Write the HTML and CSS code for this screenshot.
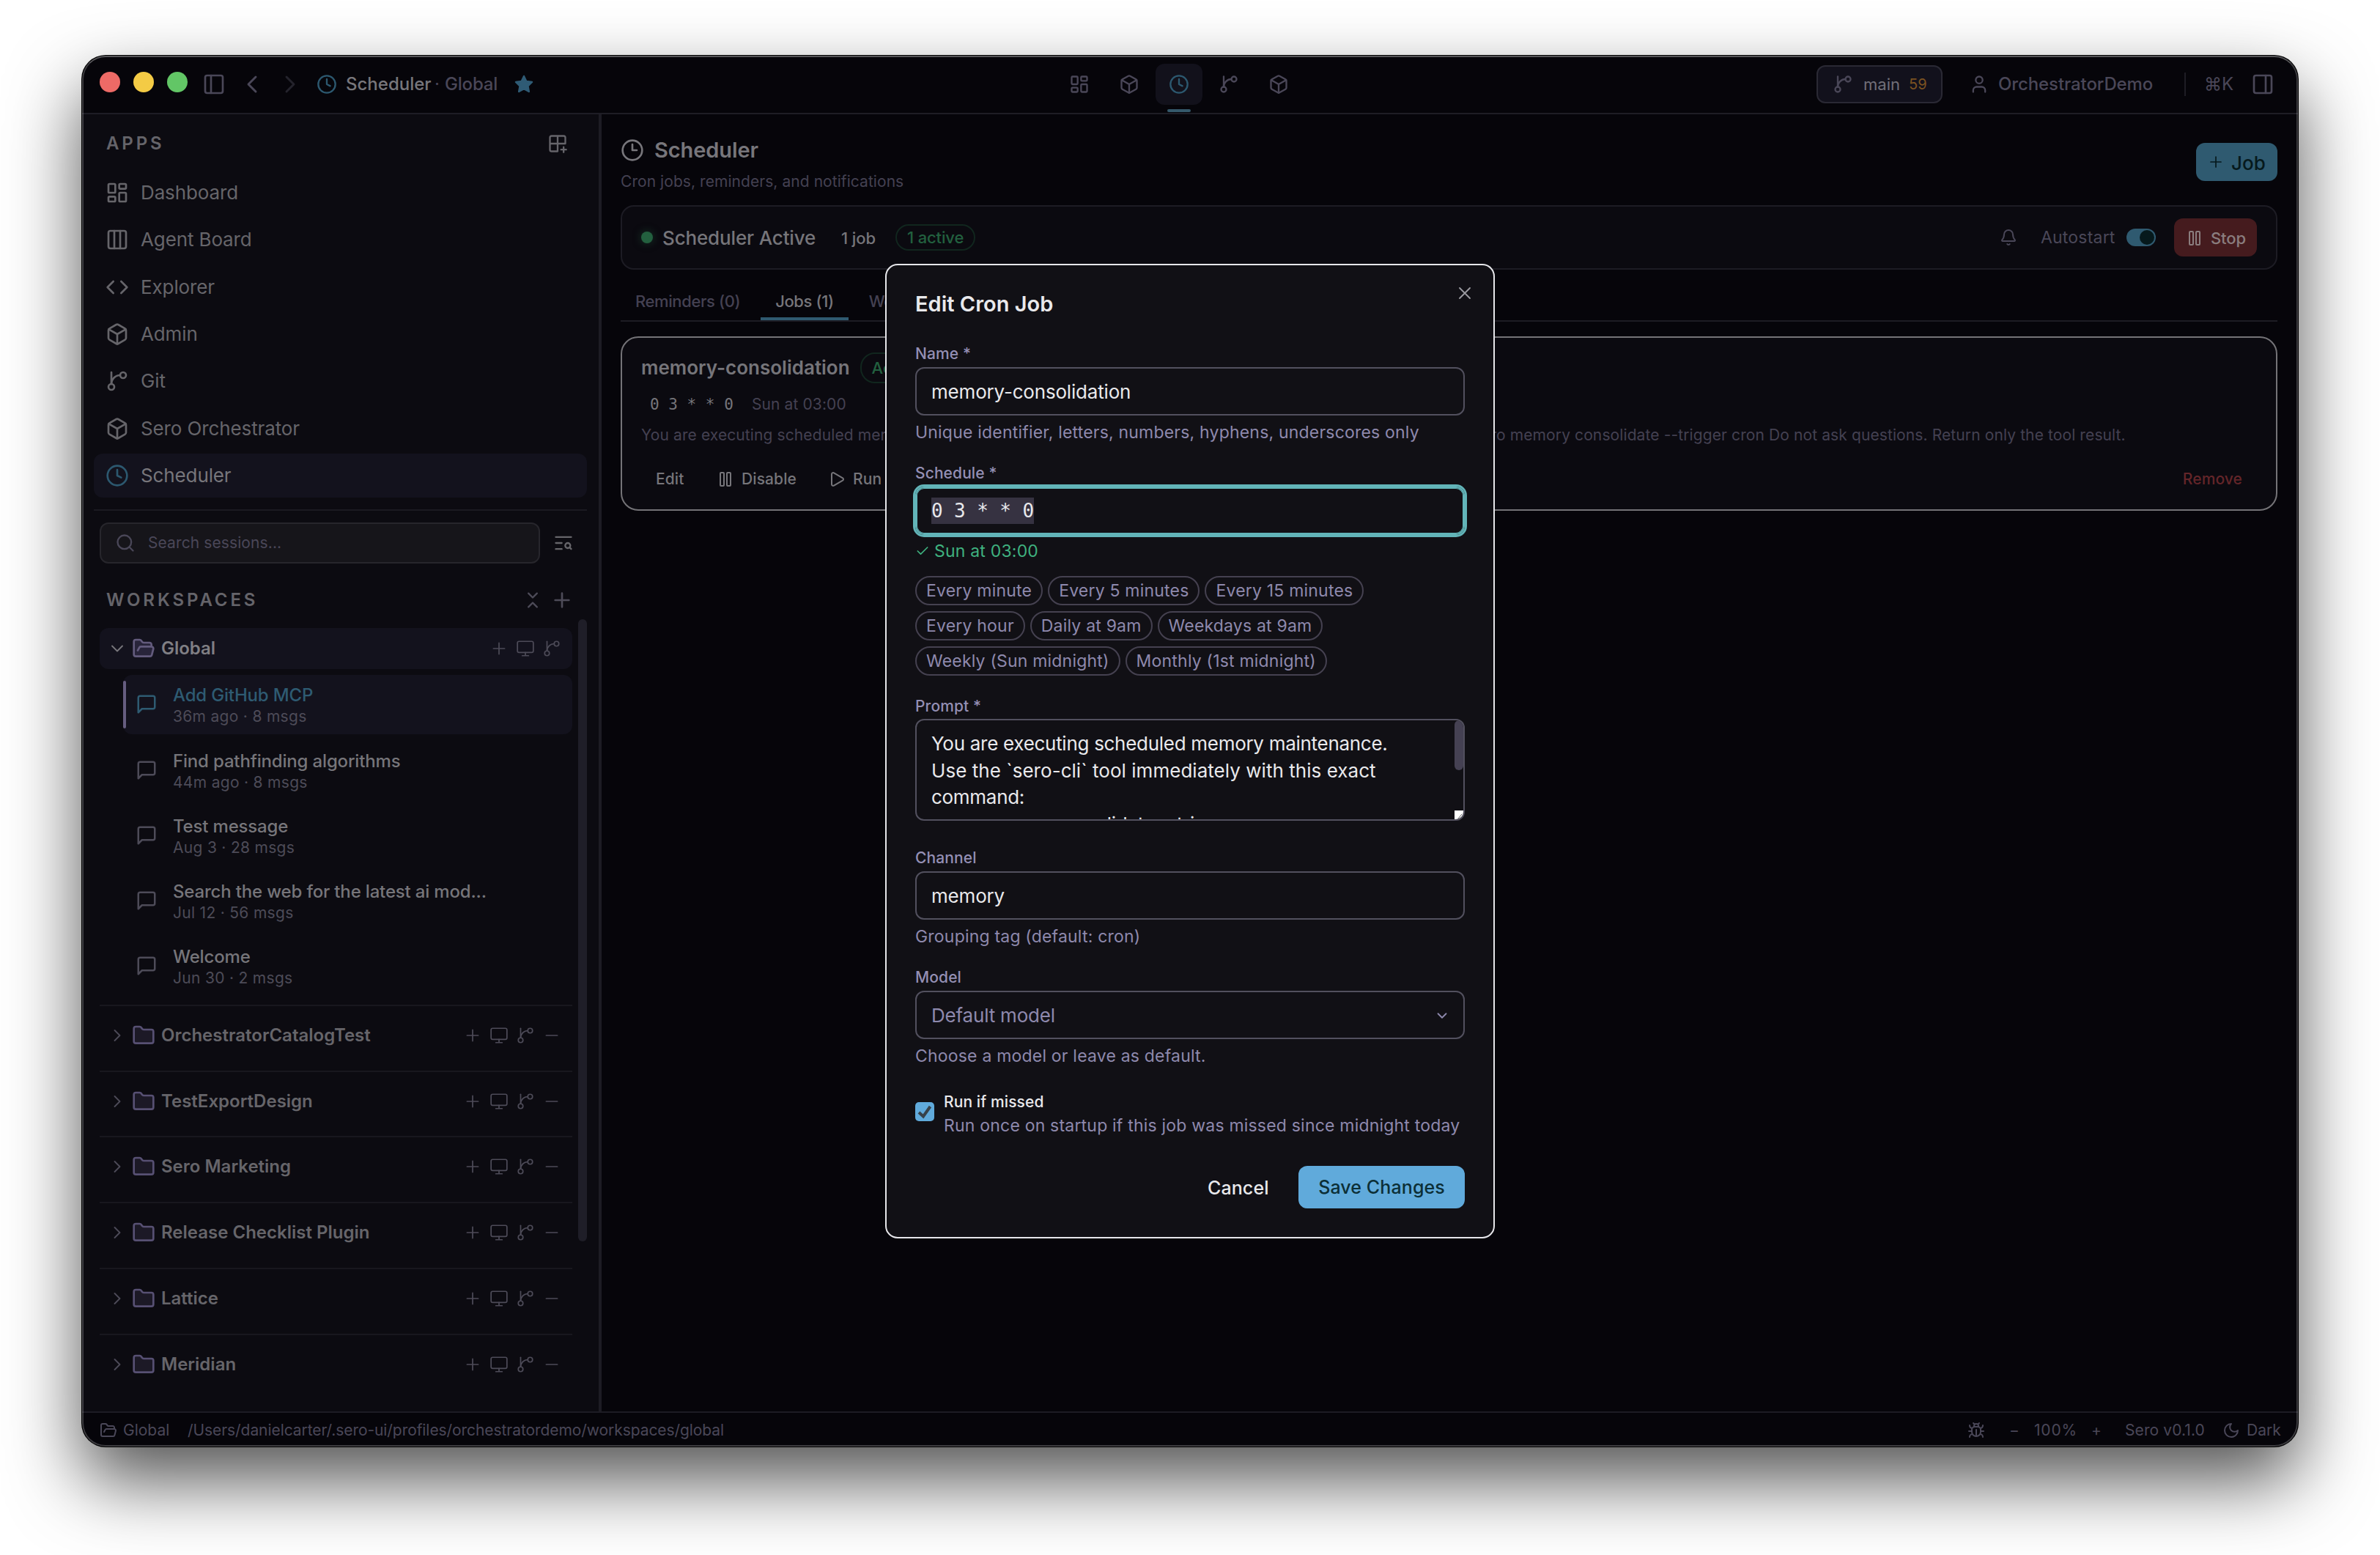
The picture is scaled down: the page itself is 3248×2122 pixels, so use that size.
FILE: index.html
```html
<!DOCTYPE html>
<html lang="en">
<head>
    <meta charset="UTF-8">
    <title>Scheduler</title>
    <link rel="stylesheet" href="styles.css">
</head>
<body>
    <svg class="sprite">
        <symbol id="panel-left" viewBox="0 0 24 24"><rect x="3" y="3" width="18" height="18" rx="2"/><path d="M9 3v18"/></symbol>
        <symbol id="panel-right" viewBox="0 0 24 24"><rect x="3" y="3" width="18" height="18" rx="2"/><path d="M15 3v18"/></symbol>
        <symbol id="chevron-left" viewBox="0 0 24 24"><path d="m15 18-6-6 6-6"/></symbol>
        <symbol id="chevron-right" viewBox="0 0 24 24"><path d="m9 18 6-6-6-6"/></symbol>
        <symbol id="chevron-down" viewBox="0 0 24 24"><path d="m6 9 6 6 6-6"/></symbol>
        <symbol id="clock" viewBox="0 0 24 24"><circle cx="12" cy="12" r="10"/><path d="M12 6v6l4 2"/></symbol>
        <symbol id="clock-flat" viewBox="0 0 24 24"><circle cx="12" cy="12" r="10"/><path d="M12 6v6h4.5"/></symbol>
        <symbol id="star" viewBox="0 0 24 24"><path d="M12 2.5l2.9 6 6.6.9-4.8 4.6 1.2 6.6-5.9-3.2-5.9 3.2 1.2-6.6-4.8-4.6 6.600-.9z"/></symbol>
        <symbol id="dashboard" viewBox="0 0 24 24"><rect x="3" y="3" width="7" height="9" rx="1"/><rect x="14" y="3" width="7" height="5" rx="1"/><rect x="14" y="12" width="7" height="9" rx="1"/><rect x="3" y="16" width="7" height="5" rx="1"/></symbol>
        <symbol id="columns" viewBox="0 0 24 24"><rect x="3" y="3" width="18" height="18" rx="2"/><path d="M9 3v18M15 3v18"/></symbol>
        <symbol id="code" viewBox="0 0 24 24"><path d="m16 18 6-6-6-6M8 6l-6 6 6 6"/></symbol>
        <symbol id="box" viewBox="0 0 24 24"><path d="M21 8a2 2 0 0 0-1-1.730l-7-4a2 2 0 0 0-2 0l-7 4A2 2 0 0 0 3 8v8a2 2 0 0 0 1 1.730l7 4a2 2 0 0 0 2 0l7-4A2 2 0 0 0 21 16Z"/><path d="m3.300 7 8.700 5 8.700-5M12 22V12"/></symbol>
        <symbol id="branch" viewBox="0 0 24 24"><path d="M6 3v12"/><circle cx="18" cy="6" r="3"/><circle cx="6" cy="18" r="3"/><path d="M15 6a9 9 0 0 0-9 9"/></symbol>
        <symbol id="grid-plus" viewBox="0 0 24 24"><path d="M12 21H5a2 2 0 0 1-2-2V5a2 2 0 0 1 2-2h14a2 2 0 0 1 2 2v7M3 12h18M12 3v18M19 16v6M16 19h6"/></symbol>
        <symbol id="search" viewBox="0 0 24 24"><circle cx="11" cy="11" r="8"/><path d="m21 21-4.300-4.300"/></symbol>
        <symbol id="text-search" viewBox="0 0 24 24"><path d="M21 5H3M10 12H3M10 19H3"/><circle cx="17" cy="15" r="3"/><path d="m21 19-1.900-1.900"/></symbol>
        <symbol id="collapse" viewBox="0 0 24 24"><path d="m7 20 5-5 5 5M7 4l5 5 5-5"/></symbol>
        <symbol id="plus" viewBox="0 0 24 24"><path d="M5 12h14M12 5v14"/></symbol>
        <symbol id="minus" viewBox="0 0 24 24"><path d="M5 12h14"/></symbol>
        <symbol id="monitor" viewBox="0 0 24 24"><rect x="2" y="3" width="20" height="14" rx="2"/><path d="M8 21h8M12 17v4"/></symbol>
        <symbol id="folder" viewBox="0 0 24 24"><path d="M20 20a2 2 0 0 0 2-2V8a2 2 0 0 0-2-2h-7.900a2 2 0 0 1-1.690-.9L9.600 3.900A2 2 0 0 0 7.930 3H4a2 2 0 0 0-2 2v13a2 2 0 0 0 2 2Z"/></symbol>
        <symbol id="folder-open" viewBox="0 0 24 24"><path d="m6 14 1.500-2.900A2 2 0 0 1 9.240 10H20a2 2 0 0 1 1.940 2.500l-1.540 6a2 2 0 0 1-1.950 1.500H4a2 2 0 0 1-2-2V5a2 2 0 0 1 2-2h3.900a2 2 0 0 1 1.690.9l.81 1.200a2 2 0 0 0 1.670.9H18a2 2 0 0 1 2 2v2"/></symbol>
        <symbol id="message" viewBox="0 0 24 24"><path d="M21 15a2 2 0 0 1-2 2H7l-4 4V5a2 2 0 0 1 2-2h14a2 2 0 0 1 2 2z"/></symbol>
        <symbol id="user" viewBox="0 0 24 24"><path d="M19 21v-2a4 4 0 0 0-4-4H9a4 4 0 0 0-4 4v2"/><circle cx="12" cy="7" r="4"/></symbol>
        <symbol id="bell" viewBox="0 0 24 24"><path d="M10.270 21a2 2 0 0 0 3.460 0M3.260 15.330A1 1 0 0 0 4 17h16a1 1 0 0 0 .740-1.670C19.410 13.960 18 12.500 18 8A6 6 0 0 0 6 8c0 4.500-1.410 5.960-2.740 7.330"/></symbol>
        <symbol id="pause" viewBox="0 0 24 24"><rect x="14" y="3" width="5" height="18" rx="1"/><rect x="5" y="3" width="5" height="18" rx="1"/></symbol>
        <symbol id="play" viewBox="0 0 24 24"><path d="M5 5a2 2 0 0 1 3.010-1.730l12 7a2 2 0 0 1 0 3.460l-12 7A2 2 0 0 1 5 19z"/></symbol>
        <symbol id="close" viewBox="0 0 24 24"><path d="M18 6 6 18M6 6l12 12"/></symbol>
        <symbol id="check" viewBox="0 0 24 24"><path d="M20 6 9 17l-5-5"/></symbol>
        <symbol id="tick" viewBox="0 0 24 24"><path d="M19.500 5 10 18.500 4 13"/></symbol>
        <symbol id="bug" viewBox="0 0 24 24"><path d="M12 20v-9M14 7a4 4 0 0 1 4 4v3a6 6 0 0 1-12 0v-3a4 4 0 0 1 4-4zM14.120 3.880 16 2M21 21a4 4 0 0 0-3.810-4M21 5a4 4 0 0 1-3.550 3.970M22 13h-4M3 21a4 4 0 0 1 3.810-4M3 5a4 4 0 0 0 3.550 3.970M6 13H2M8 2l1.880 1.880M9 7.130V6a3 3 0 1 1 6 0v1.130"/></symbol>
        <symbol id="moon" viewBox="0 0 24 24"><path d="M12 3a6 6 0 0 0 9 9 9 9 0 1 1-9-9Z"/></symbol>
    </svg>

    <div class="window">
        <header class="titlebar">
            <div class="titlebar-left">
                <div class="lights">
                    <span class="light red"></span>
                    <span class="light yellow"></span>
                    <span class="light green"></span>
                </div>
                <svg class="icon i32 panel-toggle"><use href="#panel-left"/></svg>
                <svg class="icon i40 nav-back"><use href="#chevron-left"/></svg>
                <svg class="icon i40 nav-forward"><use href="#chevron-right"/></svg>
                <svg class="icon i28 accent crumb-icon"><use href="#clock"/></svg>
                <span class="crumb-app">Scheduler</span>
                <span class="crumb-dot">·</span>
                <span class="crumb-ws">Global</span>
                <svg class="icon i28 star"><use href="#star"/></svg>
            </div>
            <nav class="app-tabs">
                <a class="app-tab"><svg class="icon i28"><use href="#dashboard"/></svg></a>
                <a class="app-tab"><svg class="icon i28"><use href="#box"/></svg></a>
                <a class="app-tab active"><svg class="icon i28"><use href="#clock"/></svg></a>
                <a class="app-tab"><svg class="icon i28"><use href="#branch"/></svg></a>
                <a class="app-tab"><svg class="icon i28"><use href="#box"/></svg></a>
            </nav>
            <div class="titlebar-right">
                <div class="branch-btn">
                    <svg class="icon i28"><use href="#branch"/></svg>
                    <span class="branch-name">main</span>
                    <span class="branch-count">59</span>
                </div>
                <svg class="icon i28 user-icon"><use href="#user"/></svg>
                <span class="user-name">OrchestratorDemo</span>
                <span class="sep"></span>
                <span class="shortcut">⌘K</span>
                <svg class="icon i32"><use href="#panel-right"/></svg>
            </div>
        </header>

        <div class="body">
            <aside class="sidebar">
                <div class="section-head apps-head">
                    <span>APPS</span>
                    <svg class="icon i28"><use href="#grid-plus"/></svg>
                </div>
                <ul class="apps">
                    <li class="app"><svg class="icon i32"><use href="#dashboard"/></svg>Dashboard</li>
                    <li class="app"><svg class="icon i32"><use href="#columns"/></svg>Agent Board</li>
                    <li class="app"><svg class="icon i32"><use href="#code"/></svg>Explorer</li>
                    <li class="app"><svg class="icon i32"><use href="#box"/></svg>Admin</li>
                    <li class="app"><svg class="icon i32"><use href="#branch"/></svg>Git</li>
                    <li class="app"><svg class="icon i32"><use href="#box"/></svg>Sero Orchestrator</li>
                    <li class="app selected"><svg class="icon i32"><use href="#clock"/></svg>Scheduler</li>
                </ul>
                <div class="search-row">
                    <div class="search"><svg class="icon i28"><use href="#search"/></svg>Search sessions...</div>
                    <svg class="icon i28 filter"><use href="#text-search"/></svg>
                </div>
                <div class="section-head ws-head">
                    <span>WORKSPACES</span>
                    <svg class="icon i28 collapse"><use href="#collapse"/></svg>
                    <svg class="icon i32"><use href="#plus"/></svg>
                </div>
                <div class="workspaces">
                    <div class="ws-row open">
                        <svg class="icon i28 chev"><use href="#chevron-down"/></svg>
                        <svg class="icon i32 folder"><use href="#folder-open"/></svg>
                        <span class="ws-name">Global</span>
                        <svg class="icon i26"><use href="#plus"/></svg>
                        <svg class="icon i26"><use href="#monitor"/></svg>
                        <svg class="icon i26"><use href="#branch"/></svg>
                    </div>
                    <ul class="sessions">
                        <li class="session current">
                            <svg class="icon i30"><use href="#message"/></svg>
                            <div class="s-text"><div class="s-title">Add GitHub MCP</div><div class="s-meta">36m ago · 8 msgs</div></div>
                        </li>
                        <li class="session">
                            <svg class="icon i30"><use href="#message"/></svg>
                            <div class="s-text"><div class="s-title">Find pathfinding algorithms</div><div class="s-meta">44m ago · 8 msgs</div></div>
                        </li>
                        <li class="session">
                            <svg class="icon i30"><use href="#message"/></svg>
                            <div class="s-text"><div class="s-title">Test message</div><div class="s-meta">Aug 3 · 28 msgs</div></div>
                        </li>
                        <li class="session">
                            <svg class="icon i30"><use href="#message"/></svg>
                            <div class="s-text"><div class="s-title">Search the web for the latest ai mod...</div><div class="s-meta">Jul 12 · 56 msgs</div></div>
                        </li>
                        <li class="session">
                            <svg class="icon i30"><use href="#message"/></svg>
                            <div class="s-text"><div class="s-title">Welcome</div><div class="s-meta">Jun 30 · 2 msgs</div></div>
                        </li>
                    </ul>
                    <div class="ws-item"><div class="ws-row">
                        <svg class="icon i28 chev"><use href="#chevron-right"/></svg>
                        <svg class="icon i32 folder"><use href="#folder"/></svg>
                        <span class="ws-name">OrchestratorCatalogTest</span>
                        <svg class="icon i26"><use href="#plus"/></svg>
                        <svg class="icon i26"><use href="#monitor"/></svg>
                        <svg class="icon i26"><use href="#branch"/></svg>
                        <svg class="icon i26"><use href="#minus"/></svg>
                    </div></div>
                    <div class="ws-item"><div class="ws-row">
                        <svg class="icon i28 chev"><use href="#chevron-right"/></svg>
                        <svg class="icon i32 folder"><use href="#folder"/></svg>
                        <span class="ws-name">TestExportDesign</span>
                        <svg class="icon i26"><use href="#plus"/></svg>
                        <svg class="icon i26"><use href="#monitor"/></svg>
                        <svg class="icon i26"><use href="#branch"/></svg>
                        <svg class="icon i26"><use href="#minus"/></svg>
                    </div></div>
                    <div class="ws-item"><div class="ws-row">
                        <svg class="icon i28 chev"><use href="#chevron-right"/></svg>
                        <svg class="icon i32 folder"><use href="#folder"/></svg>
                        <span class="ws-name">Sero Marketing</span>
                        <svg class="icon i26"><use href="#plus"/></svg>
                        <svg class="icon i26"><use href="#monitor"/></svg>
                        <svg class="icon i26"><use href="#branch"/></svg>
                        <svg class="icon i26"><use href="#minus"/></svg>
                    </div></div>
                    <div class="ws-item"><div class="ws-row">
                        <svg class="icon i28 chev"><use href="#chevron-right"/></svg>
                        <svg class="icon i32 folder"><use href="#folder"/></svg>
                        <span class="ws-name">Release Checklist Plugin</span>
                        <svg class="icon i26"><use href="#plus"/></svg>
                        <svg class="icon i26"><use href="#monitor"/></svg>
                        <svg class="icon i26"><use href="#branch"/></svg>
                        <svg class="icon i26"><use href="#minus"/></svg>
                    </div></div>
                    <div class="ws-item"><div class="ws-row">
                        <svg class="icon i28 chev"><use href="#chevron-right"/></svg>
                        <svg class="icon i32 folder"><use href="#folder"/></svg>
                        <span class="ws-name">Lattice</span>
                        <svg class="icon i26"><use href="#plus"/></svg>
                        <svg class="icon i26"><use href="#monitor"/></svg>
                        <svg class="icon i26"><use href="#branch"/></svg>
                        <svg class="icon i26"><use href="#minus"/></svg>
                    </div></div>
                    <div class="ws-item"><div class="ws-row">
                        <svg class="icon i28 chev"><use href="#chevron-right"/></svg>
                        <svg class="icon i32 folder"><use href="#folder"/></svg>
                        <span class="ws-name">Meridian</span>
                        <svg class="icon i26"><use href="#plus"/></svg>
                        <svg class="icon i26"><use href="#monitor"/></svg>
                        <svg class="icon i26"><use href="#branch"/></svg>
                        <svg class="icon i26"><use href="#minus"/></svg>
                    </div></div>
                    <span class="scrollbar"></span>
                </div>
            </aside>

            <main class="main">
                <div class="page-head">
                    <div>
                        <h1 class="page-title"><svg class="icon i32"><use href="#clock-flat"/></svg>Scheduler</h1>
                        <p class="page-sub">Cron jobs, reminders, and notifications</p>
                    </div>
                    <button class="btn btn-job"><svg class="icon i24"><use href="#plus"/></svg>Job</button>
                </div>
                <div class="status-card">
                    <span class="dot"></span>
                    <span class="status-name">Scheduler Active</span>
                    <span class="status-jobs">1 job</span>
                    <span class="badge">1 active</span>
                    <div class="status-right">
                        <svg class="icon i24"><use href="#bell"/></svg>
                        <span class="autostart">Autostart</span>
                        <span class="toggle"></span>
                        <button class="btn btn-stop"><svg class="icon i24"><use href="#pause"/></svg>Stop</button>
                    </div>
                </div>
                <div class="tabs">
                    <span class="tab">Reminders (0)</span>
                    <span class="tab active">Jobs (1)</span>
                    <span class="tab">Wo</span>
                </div>
                <div class="job-card">
                    <div class="job-head"><span class="job-name">memory-consolidation</span><span class="badge badge-lg">Active</span></div>
                    <div class="job-time"><code>0 3 * * 0</code><span>Sun at 03:00</span></div>
                    <p class="job-desc">You are executing scheduled memory maintenance. Use the `sero-cli` tool immediately with this exact command: sero memory consolidate --trigger cron Do not ask questions. Return only the tool result.</p>
                    <div class="job-actions">
                        <span class="act act-edit">Edit</span>
                        <span class="act act-disable"><svg class="icon i24"><use href="#pause"/></svg>Disable</span>
                        <span class="act"><svg class="icon i24"><use href="#play"/></svg>Run</span>
                        <span class="act act-remove">Remove</span>
                    </div>
                </div>
            </main>
        </div>

        <footer class="statusbar">
            <svg class="icon i24"><use href="#folder-open"/></svg>
            <span class="sb-ws">Global</span>
            <span class="sb-path">/Users/danielcarter/.sero-ui/profiles/orchestratordemo/workspaces/global</span>
            <svg class="icon i24 sb-bug"><use href="#bug"/></svg>
            <span class="sb-minus">−</span>
            <span class="sb-zoom">100%</span>
            <span class="sb-plus">+</span>
            <span class="sb-version">Sero v0.1.0</span>
            <svg class="icon i24 sb-moon"><use href="#moon"/></svg>
            <span class="sb-theme">Dark</span>
        </footer>

        <div class="overlay">
            <form class="modal">
                <h2 class="modal-title">Edit Cron Job</h2>
                <svg class="icon i28 modal-close"><use href="#close"/></svg>

                <div class="field">
                    <label class="label">Name *</label>
                    <div class="input">memory-consolidation</div>
                    <p class="hint">Unique identifier, letters, numbers, hyphens, underscores only</p>
                </div>
                <div class="field">
                    <label class="label">Schedule *</label>
                    <div class="input focused"><span class="selection">0 3 * * 0</span></div>
                    <p class="hint valid"><svg class="icon i20"><use href="#check"/></svg>Sun at 03:00</p>
                    <div class="chips">
                        <span class="chip">Every minute</span>
                        <span class="chip">Every 5 minutes</span>
                        <span class="chip">Every 15 minutes</span>
                        <span class="chip">Every hour</span>
                        <span class="chip">Daily at 9am</span>
                        <span class="chip">Weekdays at 9am</span>
                        <span class="chip">Weekly (Sun midnight)</span>
                        <span class="chip">Monthly (1st midnight)</span>
                    </div>
                </div>
                <div class="field">
                    <label class="label">Prompt *</label>
                    <div class="textarea"><span class="tight">You are executing scheduled memory maintenance.</span><br>Use the `sero-cli` tool immediately with this exact<br><span class="tight">command:<br>sero memory consolidate --trigger cron</span>
                        <span class="ta-thumb"></span>
                        <svg class="ta-grip" viewBox="0 0 12 12"><path d="M5 11 10 5M9 11l2-2"/></svg>
                    </div>
                </div>
                <div class="field field-channel">
                    <label class="label">Channel</label>
                    <div class="input">memory</div>
                    <p class="hint">Grouping tag (default: cron)</p>
                </div>
                <div class="field">
                    <label class="label">Model</label>
                    <div class="input select">Default model<svg class="icon i22"><use href="#chevron-down"/></svg></div>
                    <p class="hint">Choose a model or leave as default.</p>
                </div>
                <div class="check-row">
                    <span class="checkbox"><svg class="icon i24"><use href="#tick"/></svg></span>
                    <div>
                        <div class="check-title">Run if missed</div>
                        <div class="check-sub">Run once on startup if this job was missed since midnight today</div>
                    </div>
                </div>
                <div class="modal-actions">
                    <span class="cancel">Cancel</span>
                    <span class="save">Save Changes</span>
                </div>
            </form>
        </div>
    </div>
</body>
</html>
```

FILE: styles.css
```css
* {
    box-sizing: border-box;
}

body {
    margin: 0;
    width: 3248px;
    height: 2122px;
    padding: 76px 112px 0;
    overflow: hidden;
    background: #fff;
    font-family: Inter, "Liberation Sans", sans-serif;
    font-size: 24px;
    line-height: 28px;
    color: #76757a;
    white-space: nowrap;
}

h1, h2, p, ul {
    margin: 0;
    padding: 0;
    list-style: none;
}

.sprite {
    display: none;
}

.icon {
    display: block;
    flex: none;
    fill: none;
    stroke: currentColor;
    stroke-width: 2;
    stroke-linecap: round;
    stroke-linejoin: round;
}

.i20 { width: 20px; height: 20px; }
.i22 { width: 22px; height: 22px; }
.i24 { width: 24px; height: 24px; }
.i26 { width: 26px; height: 26px; }
.i28 { width: 28px; height: 28px; }
.i30 { width: 30px; height: 30px; }
.i32 { width: 32px; height: 32px; }
.i40 { width: 40px; height: 40px; }

.window {
    position: relative;
    width: 3024px;
    height: 1898px;
    display: flex;
    flex-direction: column;
    border-radius: 32px;
    overflow: hidden;
    background: #06050a;
    box-shadow: 0 0 0 1px #000, 0 46px 100px rgba(0, 0, 0, 0.68);
}

/* light rim around the window */
.window::after {
    content: "";
    position: absolute;
    inset: 0;
    border: 2px solid rgba(255, 255, 255, 0.22);
    border-top-color: rgba(255, 255, 255, 0.32);
    border-radius: 32px;
    pointer-events: none;
}

/* title bar */
.titlebar {
    height: 80px;
    flex: none;
    display: flex;
    align-items: center;
    border-bottom: 2px solid #1e1d25;
    color: #4a4758;
}

.titlebar-left {
    width: 1329px;
    padding-left: 24px;
    display: flex;
    align-items: center;
}

.lights {
    display: flex;
    gap: 18px;
    margin: -6px 20px 0 0;
}

.light {
    width: 28px;
    height: 28px;
    border-radius: 50%;
}

.red { background: #ed6a66; }
.yellow { background: #f4cb45; }
.green { background: #62c666; }

.nav-back {
    margin-left: 16px;
    stroke-width: 1.75;
}

.nav-forward {
    margin-left: 12px;
    stroke-width: 1.75;
    color: #24232c;
}

.accent {
    color: #2c586f;
}

.crumb-icon {
    margin: 0 12px 0 16px;
}

.crumb-app {
    color: #77767b;
    font-weight: 500;
    width: 121px;
}

.crumb-dot {
    width: 14px;
}

.crumb-ws {
    font-weight: 500;
    letter-spacing: -0.2px;
    width: 94px;
}

.star {
    fill: #2f5b75;
    color: #2f5b75;
}

.app-tabs {
    display: flex;
    gap: 4px;
}

.app-tab {
    position: relative;
    width: 64px;
    height: 56px;
    display: flex;
    align-items: center;
    justify-content: center;
    border-radius: 12px;
}

.app-tab.active {
    background: #12111b;
    color: #2c586f;
}

.app-tab.active::after {
    content: "";
    position: absolute;
    left: 16px;
    bottom: -10px;
    width: 32px;
    height: 4px;
    border-radius: 2px;
    background: #35596b;
}

.titlebar-right {
    margin-left: auto;
    padding-right: 32px;
    display: flex;
    align-items: center;
}

.branch-btn {
    width: 172px;
    height: 52px;
    padding-left: 20px;
    display: flex;
    align-items: center;
    border: 2px solid #2a2934;
    border-radius: 12px;
    background: #12111c;
    font-size: 22px;
}

.branch-name {
    color: #716f79;
    margin-left: 14px;
    width: 62px;
}

.branch-count {
    color: #7b5221;
    font-size: 20px;
}

.user-icon {
    margin: 0 12px 0 36px;
}

.user-name {
    width: 254px;
    font-weight: 500;
    letter-spacing: -0.1px;
}

.sep {
    width: 2px;
    height: 32px;
    background: #1e1d25;
}

.shortcut {
    width: 89px;
    padding-left: 25px;
    font-size: 24px;
}

/* layout */
.body {
    flex: 1;
    display: flex;
    min-height: 0;
}

.sidebar {
    width: 709px;
    flex: none;
    background: #0c0b11;
    border-right: 4px solid #1d1c24;
    color: #5f5d68;
}

.section-head {
    display: flex;
    align-items: center;
    color: #65646a;
    font-size: 24px;
    font-weight: 600;
    letter-spacing: 3.9px;
}

.section-head span {
    flex: 1;
}

.apps-head {
    height: 76.6px;
    padding: 4px 42px 0 33px;
}

.apps {
    padding: 0 16px 16px;
    display: flex;
    flex-direction: column;
    gap: 4px;
}

.app {
    height: 60.4px;
    padding-left: 16px;
    display: flex;
    align-items: center;
    gap: 16px;
    border-radius: 12px;
    font-size: 26px;
    letter-spacing: -0.12px;
    color: #66656a;
}

.app.selected {
    background: #13121d;
    color: #77767b;
}

.app.selected .icon {
    color: #2c586f;
}

.search-row {
    display: flex;
    align-items: center;
    margin: 0 16px;
    padding: 16px 18px 0 8px;
    border-top: 2px solid #1b1a21;
}

.search {
    width: 601px;
    height: 56px;
    padding-left: 19px;
    display: flex;
    align-items: center;
    gap: 17px;
    border: 2px solid #27262c;
    border-radius: 12px;
    background: #16151a;
    color: #4a4758;
    font-size: 21px;
    letter-spacing: 0.1px;
}

.filter {
    margin-left: auto;
    color: #66656a;
}

.ws-head {
    height: 99.6px;
    padding: 0 34px 0 33px;
    color: #65646a;
}

.ws-head .icon {
    color: #4d4b58;
}

.ws-head .collapse {
    margin-right: 10px;
}

.workspaces {
    position: relative;
    margin: -12px 36px 0 24px;
}

.scrollbar {
    position: absolute;
    top: -12px;
    right: -20px;
    width: 12px;
    height: 849px;
    border-radius: 6px;
    background: #1f1e28;
}

.ws-row {
    height: 56px;
    padding: 0 15px 0 10px;
    display: flex;
    align-items: center;
    gap: 10px;
    border-radius: 12px;
    color: #4d4b58;
}

.ws-row.open {
    background: #13121d;
}

.ws-row .icon {
    stroke-width: 1.6;
}

.ws-row .chev {
    margin-right: -4px;
}

.open .chev {
    color: #77767b;
}

.ws-row .folder {
    color: #575073;
    fill: #1c1926;
    stroke-width: 2;
    margin-right: -2px;
}

.ws-row.open .folder {
    color: #635b7d;
    fill: #28243a;
}

.ws-name {
    flex: 1;
    font-weight: 600;
    color: #66656a;
}

.open .ws-name {
    color: #807f84;
}

.sessions {
    padding: 8px 0 12px 32px;
    display: flex;
    flex-direction: column;
    gap: 8.7px;
}

.session {
    position: relative;
    height: 80.6px;
    padding-left: 17px;
    display: flex;
    align-items: center;
    gap: 21px;
    border-radius: 12px;
    color: #4d4b58;
}

.session.current {
    background: #13121d;
}

.session.current::before {
    content: "";
    position: absolute;
    left: 0;
    top: 8px;
    width: 4px;
    height: 65px;
    border-radius: 2px;
    background: #665d80;
}

.s-text {
    padding-top: 5px;
}

.s-title {
    height: 29px;
    font-weight: 500;
    letter-spacing: -0.17px;
    color: #76757a;
}

.s-meta {
    font-size: 21px;
    letter-spacing: 0.3px;
}

.current .icon,
.current .s-title {
    color: #2e5b72;
}

.ws-item {
    padding: 12px 0 19.9px;
    border-top: 2px solid #18171e;
}

/* main area */
.main {
    flex: 1;
    padding: 34px 28px 0 26px;
}

.page-head {
    display: flex;
    justify-content: space-between;
    height: 90px;
}

.page-title {
    display: flex;
    align-items: center;
    gap: 14px;
    height: 30px;
    font-size: 29px;
    font-weight: 600;
    letter-spacing: -0.1px;
    color: #77767b;
}

.page-sub {
    margin-top: 14px;
    font-size: 21px;
    letter-spacing: 0.06px;
    color: #444152;
}

.btn {
    height: 52px;
    display: flex;
    align-items: center;
    border: none;
    border-radius: 12px;
    font-family: inherit;
    font-weight: 500;
}

.btn-job {
    margin-top: 5px;
    width: 111px;
    padding: 2px 0 0 15px;
    gap: 9px;
    background: #2f5a70;
    color: #06191c;
    font-size: 26px;
}

.btn-job .icon {
    margin-top: -2px;
    stroke-width: 1.7;
}

.status-card {
    height: 88px;
    padding: 0 26px;
    display: flex;
    align-items: center;
    border: 2px solid #1d1c24;
    border-radius: 18px;
    background: #0b0a10;
}

.dot {
    width: 16px;
    height: 16px;
    border-radius: 50%;
    background: #23603f;
    box-shadow: 0 0 12px rgba(35, 96, 63, 0.5);
}

.status-name {
    margin-left: 13px;
    padding-top: 1px;
    width: 244px;
    font-size: 26px;
    font-weight: 500;
    letter-spacing: -0.15px;
}

.status-jobs {
    width: 74px;
    padding-top: 1px;
    font-size: 22px;
    font-weight: 500;
    letter-spacing: -0.1px;
}

.badge {
    height: 36px;
    padding: 0 14px;
    line-height: 33px;
    border: 2px solid #11261e;
    border-radius: 20px;
    font-size: 22px;
    font-weight: 500;
    letter-spacing: -0.15px;
    color: #22603f;
}

.badge-lg {
    height: 42px;
    line-height: 38px;
}

.status-right {
    margin-left: auto;
    display: flex;
    align-items: center;
    color: #4a4758;
}

.autostart {
    margin-left: 32px;
    width: 117px;
    font-size: 23px;
    letter-spacing: 0.2px;
}

.toggle {
    width: 40px;
    height: 24px;
    padding: 2px;
    display: flex;
    justify-content: flex-end;
    border-radius: 12px;
    background: #2f5a70;
}

.toggle::after {
    content: "";
    width: 20px;
    height: 20px;
    border-radius: 50%;
    background: #06191c;
}

.btn-stop {
    margin-left: 25px;
    width: 113px;
    padding: 1px 0 0 16px;
    gap: 10px;
    background: #451b1e;
    color: #8a7d7e;
    font-size: 22px;
    letter-spacing: -0.1px;
}

.tabs {
    height: 71px;
    display: flex;
    align-items: flex-end;
    gap: 8px;
    border-bottom: 2px solid #1d1c24;
    margin-bottom: 20px;
}

.tab {
    height: 54px;
    padding: 14px 20px 0;
    font-size: 22px;
    font-weight: 500;
    letter-spacing: -0.4px;
    color: #444152;
}

.tab.active {
    color: #76757a;
    border-bottom: 4px solid #2f5a70;
}

.job-card {
    height: 238px;
    padding: 20px 26px 0;
    border: 2px solid #747377;
    border-radius: 24px;
    background: #0b0a10;
}

.job-head {
    display: flex;
    align-items: center;
    gap: 14px;
}

.job-name {
    font-size: 26px;
    font-weight: 600;
}

.job-time {
    height: 28px;
    margin-top: 15px;
    padding-left: 12px;
    display: flex;
    align-items: center;
    font-size: 21px;
    letter-spacing: 0.1px;
    color: #444152;
}

.job-time code {
    width: 139px;
    font-family: "DejaVu Sans Mono", monospace;
    font-size: 21px;
    letter-spacing: 0;
    color: #76757a;
}

.job-desc {
    margin-top: 14px;
    font-size: 21px;
    letter-spacing: 0.106px;
    color: #444152;
}

.job-actions {
    margin-top: 32px;
    padding: 0 20px;
    display: flex;
    font-size: 21px;
    font-weight: 500;
    letter-spacing: 0.1px;
}

.act {
    display: flex;
    align-items: center;
    gap: 10px;
}

.act-edit {
    width: 83px;
}

.act-disable {
    width: 152px;
}

.act-remove {
    margin-left: auto;
    color: #632529;
}

/* status bar */
.statusbar {
    height: 48px;
    flex: none;
    padding: 2px 24px 0;
    display: flex;
    align-items: center;
    border-top: 2px solid #1d1c24;
    font-size: 21px;
    color: #4a4758;
}

.sb-ws {
    margin-left: 8px;
    width: 88px;
}

.sb-path {
    letter-spacing: -0.07px;
}

.sb-bug {
    margin-left: auto;
}

.sb-minus { margin-left: 33px; width: 34px; }
.sb-zoom { width: 78px; letter-spacing: 0.8px; }
.sb-plus { width: 46px; }
.sb-version { width: 133px; letter-spacing: 0.1px; }
.sb-theme { margin-left: 9px; width: 46px; }

/* dialog */
.overlay {
    position: absolute;
    inset: 0;
    display: flex;
    align-items: center;
    justify-content: center;
}

.modal {
    position: relative;
    width: 832px;
    height: 1330px;
    padding: 39px 39px 0;
    border: 2px solid #e6e6ea;
    border-radius: 17px;
    background: #111015;
    color: #e9e9ec;
}

.modal-title {
    font-size: 29px;
    font-weight: 600;
    margin-bottom: 39px;
}

.modal-close {
    position: absolute;
    right: 25px;
    top: 24px;
    stroke-width: 1.6;
    color: #9b9aa0;
}

.field {
    margin-bottom: 27px;
}

.label {
    display: block;
    padding-top: 1px;
    height: 28px;
    font-size: 21px;
    font-weight: 500;
    letter-spacing: 0.1px;
    color: #948fb4;
}

.input {
    height: 66px;
    margin-top: 5px;
    padding: 2px 0 0 20px;
    display: flex;
    align-items: center;
    border: 2px solid #52505e;
    border-radius: 12px;
    font-size: 26px;
    letter-spacing: -0.19px;
}

.input.focused {
    padding-top: 0;
    border-color: #62b4b8;
    box-shadow: 0 0 0 3px #62b4b8, inset 0 0 0 1px #62b4b8;
}

.selection {
    height: 36px;
    line-height: 36px;
    background: #363241;
    font-family: "DejaVu Sans Mono", monospace;
    font-size: 26px;
    letter-spacing: -0.1px;
}

.hint {
    margin-top: 9px;
    font-size: 23px;
    letter-spacing: 0.2px;
    color: #8e89ad;
}

.valid {
    display: flex;
    align-items: center;
    gap: 6px;
    margin-top: 8px;
    color: #3fb27f;
}

.chips {
    margin-top: 20px;
    display: flex;
    flex-wrap: wrap;
    gap: 8px 7px;
}

.chip {
    height: 40px;
    padding: 0 13px;
    line-height: 36px;
    border: 2px solid #454150;
    border-radius: 20px;
    font-size: 23px;
    letter-spacing: 0.2px;
    color: #8e89ad;
}

.textarea {
    position: relative;
    height: 139px;
    margin-top: 4px;
    padding: 14px 20px 0;
    border: 2px solid #52505e;
    border-radius: 12px;
    overflow: hidden;
    font-size: 26px;
    line-height: 36.6px;
    letter-spacing: 0.04px;
}

.tight {
    letter-spacing: -0.29px;
}

.ta-thumb {
    position: absolute;
    top: 0;
    right: 0;
    width: 12px;
    height: 68px;
    border-radius: 6px;
    background: #454153;
}

.ta-grip {
    position: absolute;
    right: 0;
    bottom: 0;
    width: 12px;
    height: 12px;
    background: #fff;
    fill: none;
    stroke: #666;
}

.field-channel {
    margin-top: 36px;
}

.select {
    justify-content: space-between;
    padding-right: 18px;
    color: #8e89ad;
}

.check-row {
    display: flex;
    margin-top: 32px;
    align-items: center;
    gap: 13px;
    line-height: 33px;
}

.checkbox {
    width: 26px;
    height: 26px;
    padding: 1px;
    margin-top: -6px;
    border-radius: 5px;
    background: #60aadb;
    color: #37424a;
}

.checkbox .icon {
    stroke-width: 4;
    stroke-linecap: butt;
    stroke-linejoin: miter;
}

.check-title {
    font-size: 21px;
    font-weight: 500;
    letter-spacing: 0.1px;
}

.check-sub {
    font-size: 23px;
    letter-spacing: 0.2px;
    color: #8e89ad;
}

.modal-actions {
    display: flex;
    justify-content: flex-end;
    align-items: center;
    margin-top: 38px;
    font-weight: 500;
    font-size: 25px;
    letter-spacing: 0.1px;
}

.cancel {
    width: 124px;
    padding-top: 1px;
}

.save {
    width: 227px;
    height: 58px;
    line-height: 59px;
    text-align: center;
    border-radius: 12px;
    background: #60aadb;
    color: #0c2f36;
}
```
